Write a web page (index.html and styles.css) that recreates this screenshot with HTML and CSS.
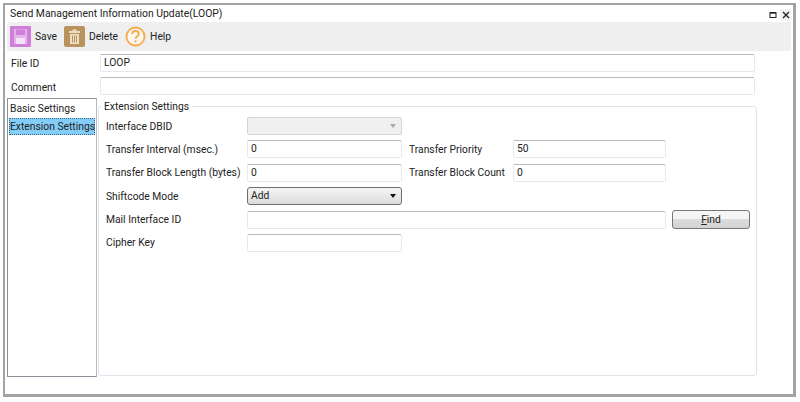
FILE: index.html
```html
<!DOCTYPE html>
<html lang="en">

<head>
    <meta charset="UTF-8">
    <title>Send Management Information Update(LOOP)</title>
    <link rel="stylesheet" href="styles.css">
</head>

<body>
    <div class="window">
        <div class="title-bar">
            <span class="title-text">Send Management Information Update(LOOP)</span>
            <div class="window-buttons">
                <span class="win-btn">
                    <svg width="8" height="8" viewBox="0 0 8 8"><rect x="1" y="1.5" width="6" height="5" fill="none" stroke="#222" stroke-width="1"/><path d="M1 2h6" stroke="#222" stroke-width="1.4"/></svg>
                </span>
                <span class="win-btn win-btn-close">
                    <svg width="8" height="8" viewBox="0 0 8 8"><path d="M1 1l6 6M7 1l-6 6" stroke="#222" stroke-width="1.4"/></svg>
                </span>
            </div>
        </div>

        <!-- Toolbar -->
        <div class="toolbar">
            <button class="tool">
                <svg width="21" height="21" viewBox="0 0 21 21">
                    <rect width="21" height="21" rx="1" fill="#cf7ed9"/>
                    <path d="M4 3h13v15H4z" fill="#e6b4ea"/>
                    <path d="M6 3.500h9v5.500H6z" fill="#cf7ed9"/>
                    <path d="M6 12h9v6H6z" fill="#f4e2f6"/>
                </svg>
                <span>Save</span>
            </button>
            <button class="tool">
                <svg width="21" height="21" viewBox="0 0 21 21">
                    <rect width="21" height="21" rx="2" fill="#b8945c"/>
                    <path d="M5 5h11v2H5zM8.500 3.500h4V5h-4z" fill="#ecdfc6"/>
                    <path d="M6 8h9v10H6z" fill="#ecdfc6"/>
                    <path d="M8.500 9.500v7M10.500 9.500v7M12.500 9.500v7" stroke="#b8945c" stroke-width="1"/>
                </svg>
                <span>Delete</span>
            </button>
            <button class="tool">
                <svg width="21" height="21" viewBox="0 0 22 22">
                    <circle cx="11" cy="11" r="9.500" fill="#fdf8ef" stroke="#f6ab4f" stroke-width="2"/>
                    <path d="M7.500 8.500C7.500 6.300 9 5.200 11 5.200S14.500 6.400 14.500 8.300C14.500 10.600 11 10.800 11 13.400" fill="none" stroke="#f6ab4f" stroke-width="2"/>
                    <rect x="10" y="15" width="2" height="2.200" fill="#f6ab4f"/>
                </svg>
                <span>Help</span>
            </button>
        </div>

        <div class="form-row">
            <label>File ID</label>
            <div class="field">LOOP</div>
        </div>
        <div class="form-row">
            <label class="label-low">Comment</label>
            <div class="field"></div>
        </div>

        <div class="main">
            <ul class="side-list">
                <li>Basic Settings</li>
                <li class="selected">Extension Settings</li>
            </ul>

            <fieldset class="group">
                <legend>Extension Settings</legend>
                <div class="settings-grid">
                    <label>Interface DBID</label>
                    <div class="field combo-disabled"><span class="arrow arrow-grey"></span></div>
                    <div class="fill"></div>

                    <label>Transfer Interval (msec.)</label>
                    <div class="field">0</div>
                    <label class="label-right">Transfer Priority</label>
                    <div class="field">50</div>
                    <div></div>

                    <label>Transfer Block Length (bytes)</label>
                    <div class="field">0</div>
                    <label class="label-right">Transfer Block Count</label>
                    <div class="field">0</div>
                    <div></div>

                    <label>Shiftcode Mode</label>
                    <div class="combo">Add<span class="arrow"></span></div>
                    <div class="fill"></div>

                    <label>Mail Interface ID</label>
                    <div class="field span-3"></div>
                    <button class="find"><u>F</u>ind</button>

                    <label>Cipher Key</label>
                    <div class="field"></div>
                    <div class="fill"></div>
                </div>
            </fieldset>
        </div>
    </div>
</body>

</html>
```

FILE: styles.css
```css
body {
    margin: 0;
    background: #fff;
    color: #222;
    font-family: Roboto, "Noto Sans", sans-serif;
    font-size: 10.3px;
}

.window {
    box-sizing: border-box;
    width: 793px;
    height: 394px;
    margin: 3px 0 0 3px;
    padding: 0 2px;
    border: 2px solid #a3a3a3;
    border-right-width: 3px;
    border-bottom-width: 3px;
    background: #fff;
}

/* Title bar */
.title-bar {
    display: flex;
    align-items: center;
    justify-content: space-between;
    height: 17px;
    padding-left: 3px;
}

.title-text {
    font-size: 10.4px;
}

.window-buttons {
    display: flex;
    align-items: center;
    margin-top: 2px;
    gap: 2px;
}

.win-btn {
    display: flex;
    align-items: center;
    justify-content: center;
    width: 11px;
    height: 12px;
}

.win-btn-close {
    background: #f2f2f2;
}

/* Toolbar */
.toolbar {
    display: flex;
    align-items: center;
    gap: 7px;
    height: 29px;
    padding-left: 3px;
    background: #efefef;
    border-radius: 3px;
}

.tool {
    display: flex;
    align-items: center;
    gap: 4px;
    padding: 0;
    border: none;
    background: none;
    color: #222;
    font: inherit;
}

/* Top rows */
.form-row {
    display: flex;
    align-items: center;
    height: 18px;
    margin-top: 5px;
    padding-left: 4px;
}

.form-row:nth-child(3) {
    margin-top: 3px;
}

.form-row label {
    width: 89px;
}

.form-row .label-low {
    padding-top: 2px;
}

.form-row .field {
    width: 655px;
}

.field {
    box-sizing: border-box;
    height: 18px;
    padding-left: 3px;
    line-height: 16px;
    background: #fff;
    border: 1px solid #e3e9ed;
    border-top-color: #b9b9bd;
    border-radius: 2px;
}

.main {
    display: flex;
    height: 279px;
    margin-top: 3px;
}

/* Side list */
.side-list {
    box-sizing: border-box;
    width: 90px;
    height: 279px;
    margin: 0;
    padding: 1px;
    list-style: none;
    border: 1px solid #8b929c;
    border-right-color: #b5b9bf;
    white-space: nowrap;
}

.side-list li {
    height: 17px;
    padding-left: 1px;
    line-height: 17px;
}

.side-list .selected {
    box-sizing: border-box;
    margin-top: 1px;
    padding-left: 0;
    line-height: 15px;
    background: #84cdf8;
    border: 1px dotted #3c6a88;
}

/* Group box */
.group {
    box-sizing: border-box;
    width: 659px;
    height: 276px;
    margin: 2px 0 0 1px;
    padding: 0 0 0 7px;
    border: 1px solid #dbe5ea;
    border-radius: 3px;
}

.group legend {
    margin-left: -5px;
    padding: 1px 3px 0;
    line-height: 12px;
}

.settings-grid {
    display: grid;
    grid-template-columns: 141px 155px 111px 153px 84px;
    grid-auto-rows: 18px;
    row-gap: 5.4px;
    align-items: center;
    margin-top: 4px;
}

.settings-grid .fill {
    grid-column: 3 / -1;
}

.settings-grid .label-right {
    padding-left: 7px;
    white-space: nowrap;
}

.settings-grid label {
    white-space: nowrap;
}

.span-3 {
    grid-column: 2 / 5;
}

.combo-disabled {
    position: relative;
    background: #f0f0f0;
    border-color: #d4d4d4;
}

.combo {
    position: relative;
    box-sizing: border-box;
    height: 18px;
    padding-left: 3px;
    line-height: 16px;
    background: linear-gradient(#f4f4f4, #dcdcdc);
    border: 1px solid #6e6e6e;
    border-radius: 3px;
}

.arrow {
    position: absolute;
    top: 6px;
    right: 5px;
    border-left: 3.500px solid transparent;
    border-right: 3.500px solid transparent;
    border-top: 4px solid #111;
}

.arrow-grey {
    border-top-color: #a8a8a8;
}

.find {
    box-sizing: border-box;
    width: 78px;
    height: 19px;
    margin-left: 6px;
    padding: 0;
    background: linear-gradient(#f5f5f5 45%, #dcdcdc 50%, #d2d2d2);
    border: 1px solid #777;
    border-radius: 3px;
    color: #222;
    font: inherit;
}
```
